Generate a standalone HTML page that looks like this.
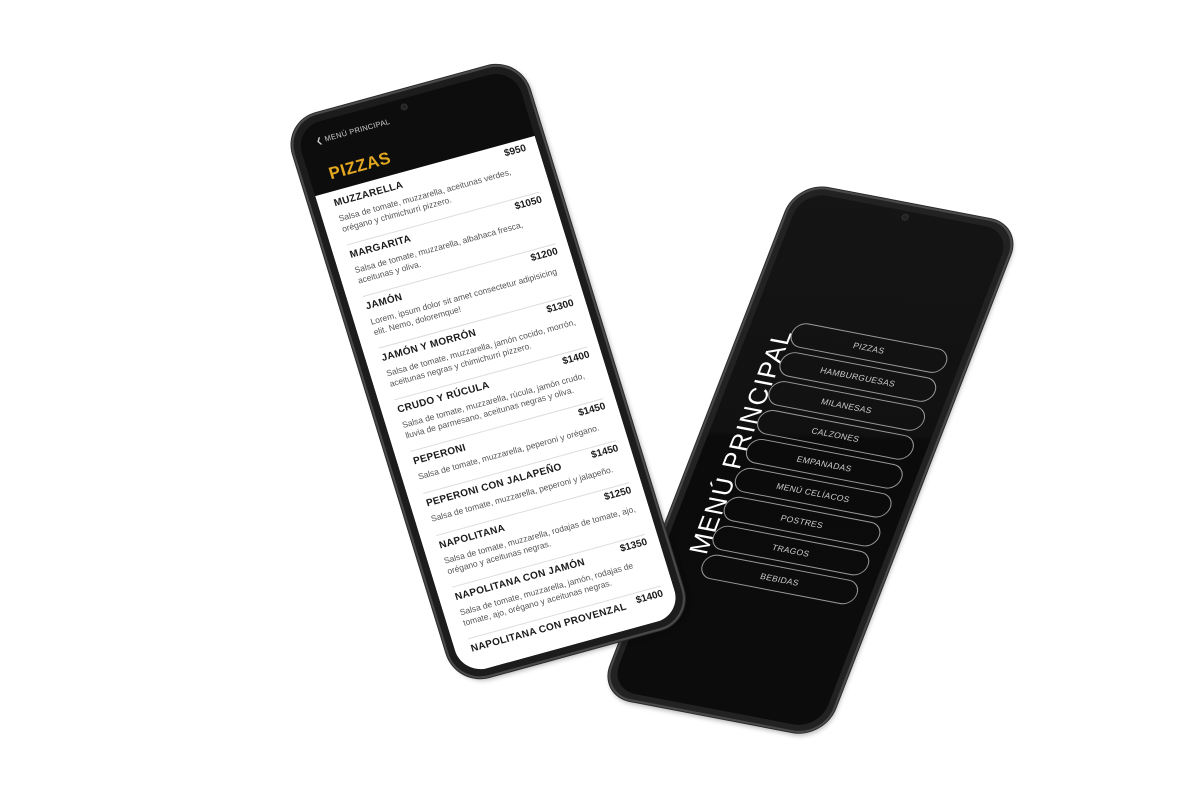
<!DOCTYPE html>
<html><head><meta charset="utf-8"><style>
*{margin:0;padding:0;box-sizing:border-box}
body{width:1200px;height:800px;background:#fff;position:relative;overflow:hidden;font-family:"Liberation Sans",sans-serif}
.ph{position:absolute;left:0;top:0;transform-origin:0 0;background:#1c1c1c;border:2px solid #4a4a4a;box-shadow:0 0 0 1px #2a2a2a, 2px 3px 4px rgba(0,0,0,.25)}
.scr{position:absolute;background:#0d0d0d;overflow:hidden}
.cam{position:absolute;width:7px;height:7px;border-radius:50%;background:#222;border:1px solid #333}
#L{z-index:2;width:246px;height:590px;border-radius:34px;transform:matrix(0.963,-0.264,0.294,0.956,283,122)}
#L .scr{left:7px;top:7px;right:7px;bottom:7px;border-radius:26px}
.hdr{position:absolute;left:17px;top:14px;color:#ccc;font-size:7.5px;letter-spacing:.3px}
.pz{position:absolute;left:20px;top:44px;color:#e3a81f;font-size:17px;font-weight:bold;letter-spacing:.5px}
.wh{position:absolute;left:0;right:0;top:71px;bottom:0;background:#fff;padding:6px 12px 0 16px}
.it{position:relative;border-bottom:1px solid #ddd;margin-bottom:4px}
.nm{font-size:10px;font-weight:bold;color:#1a1a1a;line-height:14px;letter-spacing:.3px}
.pr{position:absolute;right:0;top:-2px;font-size:10px;font-weight:bold;color:#1a1a1a}
.ds{font-size:8.5px;color:#555;line-height:10.5px;padding-top:3px}
.h2{height:50px}.h1{height:40px}
#R{z-index:1;width:229px;height:550px;border-radius:32px;transform:matrix(0.982,0.188,-0.360,0.933,797,182);background:#222}
#R .scr{left:6px;top:6px;right:6px;bottom:6px;border-radius:26px;background:linear-gradient(170deg,#151515 0%,#111 45%,#0b0b0b 46%,#0c0c0c 100%)}
.mp{position:absolute;left:34px;top:262px;transform:translate(-50%,-50%) rotate(-90deg);color:#fff;font-size:26px;white-space:nowrap;letter-spacing:1.5px}
.pill{position:absolute;left:42px;width:158px;height:26px;border:1px solid #999;border-radius:13px;color:#ccc;font-size:8.5px;text-align:center;line-height:24px;letter-spacing:.3px}
</style></head><body>

<div class="ph" id="L">
 <div class="scr">
  <div class="cam" style="left:108px;top:5px"></div>
  <div class="hdr">&#10094; MENÚ PRINCIPAL</div>
  <div class="pz">PIZZAS</div>
  <div class="wh">
   <div class="it h2"><div class="nm">MUZZARELLA</div><div class="pr">$950</div><div class="ds">Salsa de tomate, muzzarella, aceitunas verdes, orégano y chimichurri pizzero.</div></div>
   <div class="it h2"><div class="nm">MARGARITA</div><div class="pr">$1050</div><div class="ds">Salsa de tomate, muzzarella, albahaca fresca, aceitunas y oliva.</div></div>
   <div class="it h2"><div class="nm">JAMÓN</div><div class="pr">$1200</div><div class="ds">Lorem, ipsum dolor sit amet consectetur adipisicing elit. Nemo, doloremque!</div></div>
   <div class="it h2"><div class="nm">JAMÓN Y MORRÓN</div><div class="pr">$1300</div><div class="ds">Salsa de tomate, muzzarella, jamón cocido, morrón, aceitunas negras y chimichurri pizzero.</div></div>
   <div class="it h2"><div class="nm">CRUDO Y RÚCULA</div><div class="pr">$1400</div><div class="ds">Salsa de tomate, muzzarella, rúcula, jamón crudo, lluvia de parmesano, aceitunas negras y oliva.</div></div>
   <div class="it h1"><div class="nm">PEPERONI</div><div class="pr">$1450</div><div class="ds">Salsa de tomate, muzzarella, peperoni y orégano.</div></div>
   <div class="it h1"><div class="nm">PEPERONI CON JALAPEÑO</div><div class="pr">$1450</div><div class="ds">Salsa de tomate, muzzarella, peperoni y jalapeño.</div></div>
   <div class="it h2"><div class="nm">NAPOLITANA</div><div class="pr">$1250</div><div class="ds">Salsa de tomate, muzzarella, rodajas de tomate, ajo, orégano y aceitunas negras.</div></div>
   <div class="it h2"><div class="nm">NAPOLITANA CON JAMÓN</div><div class="pr">$1350</div><div class="ds">Salsa de tomate, muzzarella, jamón, rodajas de tomate, ajo, orégano y aceitunas negras.</div></div>
   <div class="it h2" style="border:none"><div class="nm">NAPOLITANA CON PROVENZAL</div><div class="pr">$1400</div></div>
  </div>
 </div>
</div>

<div class="ph" id="R">
 <div class="scr">
  <div class="cam" style="left:104px;top:3px"></div>
  <div class="mp">MENÚ PRINCIPAL</div>
  <div class="pill" style="top:131px">PIZZAS</div>
  <div class="pill" style="top:162px">HAMBURGUESAS</div>
  <div class="pill" style="top:193px">MILANESAS</div>
  <div class="pill" style="top:224px">CALZONES</div>
  <div class="pill" style="top:255px">EMPANADAS</div>
  <div class="pill" style="top:286px">MENÚ CELÍACOS</div>
  <div class="pill" style="top:317px">POSTRES</div>
  <div class="pill" style="top:348px">TRAGOS</div>
  <div class="pill" style="top:379px">BEBIDAS</div>
 </div>
</div>

</body></html>
